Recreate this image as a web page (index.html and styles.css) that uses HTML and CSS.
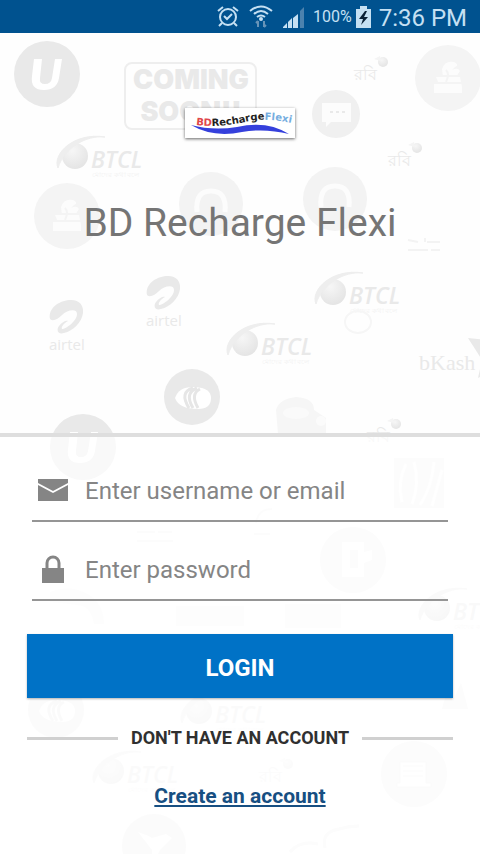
FILE: index.html
```
<!DOCTYPE html>
<html lang="en">
<head>
  <meta charset="UTF-8">
  <meta name="viewport" content="width=device-width, initial-scale=1.0">
  <title>BD Recharge Flexi</title>
  <link rel="stylesheet" href="styles.css">
</head>
<body>

  <!-- Operator logos behind the whole page -->
  <svg class="pattern" viewBox="0 0 480 854" preserveAspectRatio="xMidYMin slice" aria-hidden="true">
    <defs>
      <radialGradient id="globe" cx="0.4" cy="0.3" r="0.8">
        <stop offset="0" stop-color="#f6f6f6"/>
        <stop offset="1" stop-color="#e2e2e2"/>
      </radialGradient>
      <g id="btcl">
        <circle cx="19" cy="26" r="13" fill="url(#globe)"/>
        <path d="M2 38C-4 24 18 2 49 7C30 5 8 18 2 38z" fill="#eee" stroke="#eee"/>
        <text x="35" y="38" class="btcl-name">BTCL</text>
        <text x="36" y="47" class="btcl-tag">মোদের কথা বলে</text>
      </g>
      <g id="airtel">
        <path d="M1 19C-1 8 10 1 20 0C30-1 35 5 34 13C33 22 24 31 15 33C9 35 7 30 10 26C13 22 17 20 19 21C14 24 12 27 13 29C17 29 28 21 28 14C28 8 18 10 13 15C9 19 4 22 1 19z" fill="#e9e9e9"/>
        <text x="0" y="50" class="airtel-name">airtel</text>
      </g>
      <g id="robi">
        <text x="0" y="24" class="robi-name">রবি</text>
        <circle cx="29" cy="6" r="5" fill="url(#globe)"/>
        <path d="M20 3l6-3l1 5z" fill="#f4f4f4"/>
      </g>
      <g id="utility">
        <circle cx="0" cy="0" r="33" fill="#e9e9e9"/>
        <path d="M-13-15H-5L-7 4Q-8 10-2 10Q4 10 5 4L8-15H15L12 4Q10 16-3 16Q-17 16-15 2z" fill="#fff"/>
      </g>
      <g id="worker">
        <circle cx="0" cy="0" r="33" fill="#f4f4f4"/>
        <path d="M-14 15V6h5l-3-7h7l-1-8q3-9 12-7q6 3 1 5l-3 3q6-3 8 1l-4 6h4l2 10v6z" fill="#fcfcfc"/>
        <path d="M-14 5h28M-10-2h20M-2-8q4 4 0 12" fill="none" stroke="#f4f4f4" stroke-width="2"/>
      </g>
      <g id="support">
        <circle cx="0" cy="0" r="32" fill="#f3f3f3"/>
        <path d="M-14 8Q-16-13 0-13Q16-13 14 8" fill="none" stroke="#fcfcfc" stroke-width="5"/>
      </g>
      <g id="eye">
        <circle cx="0" cy="0" r="28" fill="#e9e9e9"/>
        <path d="M-17 1Q-13-11 3-10Q19-9 19 1Q19 12 6 12Q-13 12-17 1z" fill="#fff"/>
        <path d="M1-9Q-13-5-3 11M5-9Q-8-4 1 11M8-8Q-2-3 6 11" fill="none" stroke="#e6e6e6" stroke-width="3"/>
      </g>
    </defs>

    <use href="#utility" x="47" y="74"/>
    <rect x="125" y="63" width="131" height="66" rx="7" fill="none" stroke="#eee" stroke-width="2"/>
    <text x="191" y="89" class="soon">COMING</text>
    <text x="191" y="121" class="soon">SOON!!</text>
    <use href="#btcl" x="56" y="130"/>
    <use href="#btcl" x="314" y="266"/>
    <use href="#btcl" x="226" y="317"/>
    <use href="#robi" x="354" y="56"/>
    <use href="#robi" x="388" y="142"/>
    <use href="#robi" x="367" y="418"/>
    <use href="#worker" x="448" y="78"/>
    <use href="#worker" x="67" y="216"/>
    <use href="#support" x="211" y="204"/>
    <use href="#support" x="335" y="199"/>
    <circle cx="336" cy="114" r="24" fill="#f0f0f0"/>
    <path d="M322 103h29v19h-20l-5 5v-5h-4z" fill="#fcfcfc"/>
    <path d="M330 112h3m3 0h3m3 0h3" stroke="#e9e9e9" stroke-width="2"/>
    <path d="M408 240l10 2m7-4v4m2 0h13M408 250h20m3 0h9" stroke="#f3f3f3" stroke-width="2" fill="none"/>
    <use href="#airtel" x="146" y="276"/>
    <use href="#airtel" x="49" y="300"/>
    <ellipse cx="358" cy="322" rx="13" ry="11" fill="none" stroke="#f6f6f6" stroke-width="2"/>
    <use href="#eye" x="192" y="397"/>
    <text x="419" y="370" class="bkash">bKash</text>
    <path d="M468 338l18 2v34l-8 4l4-18z" fill="#e9e9e9"/>
    <path d="M276 410q3-11 20-13q18 1 18 13l12 8v16h-48z" fill="#f6f6f6"/>
    <ellipse cx="296" cy="413" rx="13" ry="6" fill="#fafafa"/>
    <circle cx="321" cy="421" r="5" fill="#fbfbfb"/>
    <use href="#utility" x="83" y="447"/>

    <path d="M394 458h50v50h-50z" fill="#f6f6f6"/>
    <path d="M402 502q-5-20 4-38M412 504q8-20 2-42M420 505q12-18 14-43M432 506l10-36" fill="none" stroke="#fdfdfd" stroke-width="3"/>
    <path d="M137 532h18m3 0h14M137 541h36M256 523q2-14 16-14M254 534h16" fill="none" stroke="#f6f6f6" stroke-width="2"/>
    <circle cx="353" cy="560" r="33" fill="#f3f3f3"/>
    <path d="M342 542h22v10l8-2v10l-8 3v14h-22zM350 550v18h8v-18z" fill="#fff" fill-rule="evenodd"/>
    <use href="#btcl" x="418" y="582"/>
    <path d="M50 592q20-8 38 2q16 10 16 30h-10q-3-16-12-18t-32-4zM176 606h68v20H176zM285 604h56v24h-56z" fill="#f8f8f8"/>
    <use href="#eye" x="56" y="710" opacity="0.6"/>
    <use href="#btcl" x="180" y="685" opacity="0.7"/>
    <use href="#btcl" x="92" y="745" opacity="0.7"/>
    <path d="M442 709l5-18l6 10l8-18l7 26z" fill="#f3f3f3"/>
    <use href="#robi" x="259" y="758" opacity="0.6"/>
    <circle cx="414" cy="774" r="33" fill="#f3f3f3"/>
    <path d="M400 762h26v21h5v4h-34v-4h3zM403 766h20M403 771h20M403 776h20" fill="#fff" stroke="#f1f1f1"/>
    <circle cx="154" cy="846" r="32" fill="#f1f1f1"/>
    <path d="M138 832q12 4 14 6l14-4l6 4l-12 12l-8 16v-16z" fill="#fff"/>
    <path d="M325 848q-4-16 14-19q10-3 20-3M290 852q10-12 28-8" fill="none" stroke="#f3f3f3" stroke-width="3"/>
  </svg>

  <header class="status-bar">
    <svg class="status-icon" width="22" height="24" viewBox="0 0 22 24" fill="none" stroke="#c5e0f3" stroke-width="2" role="img" aria-label="Alarm">
      <circle cx="11" cy="12" r="8"/>
      <path d="M7 11l3 3l5-5M1 6l5-4M21 6l-5-4M5 18l-3 3M17 18l3 3"/>
    </svg>
    <svg class="status-icon" width="24" height="24" viewBox="0 0 24 24" fill="none" stroke="#c5e0f3" stroke-width="2" role="img" aria-label="Wi-Fi">
      <path d="M1 6Q12-3 23 6M5 9Q12 3 19 9M8 12Q12 9 16 12"/>
      <circle cx="12" cy="14" r="1" fill="#c5e0f3"/>
      <path d="M9 22v-6M7 18l2-2M15 16v6M17 20l-2 2" stroke="#6894b8"/>
    </svg>
    <svg class="status-icon" width="22" height="24" viewBox="0 0 22 24" role="img" aria-label="Signal">
      <path d="M0 23v-1l4-4v5zM5 23v-6l4-4v10zM10 23v-10l5-4v14z" fill="#c5e0f3"/>
      <path d="M17 23V6l4-4v21z" fill="#4c82ae"/>
    </svg>
    <span class="battery-level">100%</span>
    <svg class="battery-icon" width="15" height="22" viewBox="0 0 15 22" role="img" aria-label="Charging">
      <path d="M0 3h4V0h7v3h4v19H0z" fill="#c5e0f3"/>
      <path d="M9 5L3 13h4l-2 6l7-8H8l3-6z" fill="#0a2136"/>
    </svg>
    <time class="clock">7:36 PM</time>
  </header>

  <section class="hero">
    <svg class="logo" width="110" height="30" viewBox="0 0 110 30" role="img" aria-label="BDRechargeFlexi">
      <path id="logoWave" d="M11 17Q32 20 60 14Q78 9 106 15" fill="none"/>
      <path d="M6 17Q28 23 52 19Q82 12 104 26Q80 20 57 24Q28 30 6 17z" fill="#3540dc"/>
      <text class="logo-text"><textPath href="#logoWave"><tspan fill="#e0474c">BD</tspan><tspan fill="#222">Recharge</tspan><tspan fill="#75ade0">Flexi</tspan></textPath></text>
    </svg>
    <h1>BD Recharge Flexi</h1>
  </section>

  <main class="login-panel">
    <form class="login-form">
      <div class="field">
        <label for="username" aria-label="Username or email">
          <svg width="30" height="22" viewBox="0 0 30 22" fill="#858585">
            <path d="M0 0h30v4L15 12L0 4z"/>
            <path d="M0 6l15 8l15-8v16H0z"/>
          </svg>
        </label>
        <input type="text" id="username" placeholder="Enter username or email">
      </div>
      <div class="field">
        <label for="password" aria-label="Password">
          <svg width="30" height="28" viewBox="0 0 30 28" fill="#858585">
            <path d="M4 13h22v15H4z"/>
            <path d="M9 14V8a6 6 0 0 1 12 0v6" fill="none" stroke="#858585" stroke-width="3"/>
          </svg>
        </label>
        <input type="password" id="password" placeholder="Enter password">
      </div>
      <button type="submit" class="login-button">LOGIN</button>
    </form>
    <p class="divider">DON'T HAVE AN ACCOUNT</p>
    <a href="#" class="create-link">Create an account</a>
  </main>

</body>
</html>
```
FILE: styles.css
```
* {
  box-sizing: border-box;
}
body {
  font-family: Roboto, sans-serif;
  margin: 0;
  min-height: 100vh;
  display: flex;
  flex-direction: column;
  position: relative;
  overflow-x: hidden;
  background-color: #fefefe;
}
.pattern {
  position: absolute;
  top: 0;
  left: 0;
  width: 100%;
  height: 100%;
  z-index: -1;
}
.pattern text {
  fill: #e9e9e9;
}
.pattern .btcl-name {
  font: italic 600 23px "Open Sans", sans-serif;
}
.pattern .btcl-tag {
  font-size: 7px;
  fill: #f2f2f2;
}
.pattern .airtel-name {
  font: 15px "Open Sans", sans-serif;
}
.pattern .robi-name {
  font-size: 16px;
}
.pattern .bkash {
  font: 22px "Liberation Serif", serif;
}
.pattern .soon {
  font: 900 27px Inter, sans-serif;
  text-anchor: middle;
}
.status-bar {
  display: flex;
  align-items: center;
  justify-content: flex-end;
  height: 33px;
  padding-right: 13px;
  background-color: #00528f;
  color: #c5e0f3;
}
.status-icon {
  margin-right: 10px;
}
.battery-level {
  font-size: 16px;
  margin-right: 4px;
}
.status-icon + .battery-level {
  margin-left: -2px;
}
.clock {
  font-size: 24px;
  line-height: 28px;
  padding-top: 3px;
  margin-left: 8px;
}
.hero {
  display: flex;
  flex-direction: column;
  align-items: center;
  height: 400px;
  padding-top: 75px;
}
.logo {
  background-color: #fff;
  box-shadow: 0 1px 3px rgba(0, 0, 0, 0.6);
}
.logo-text {
  font: bold 10px "DejaVu Sans", sans-serif;
}
h1 {
  margin: 61px 0 0;
  font-size: 39px;
  line-height: 48px;
  font-weight: 400;
  color: #757575;
}
.login-panel {
  flex: 1;
  display: flex;
  flex-direction: column;
  padding: 20px 27px;
  border-top: 4px solid #dedede;
  background-color: rgba(255, 255, 255, 0.7);
}
.login-form {
  display: flex;
  flex-direction: column;
}
.field {
  display: flex;
  align-items: center;
  height: 65px;
  margin: 0 5px 14px;
  padding-top: 3px;
  border-bottom: 2px solid #959595;
}
.field label {
  display: flex;
  padding: 0 17px 0 6px;
}
.field input {
  flex: 1;
  min-width: 0;
  padding: 2px 0 0;
  border: 0;
  outline: 0;
  background: none;
  font-family: inherit;
  font-size: 24px;
  color: #333;
}
.field input::placeholder {
  color: #858585;
  opacity: 1;
}
.login-button {
  height: 64px;
  margin-top: 19px;
  padding-top: 4px;
  border: 0;
  background-color: #0072c6;
  box-shadow: 0 1px 2px rgba(0, 0, 0, 0.3);
  color: #fff;
  font-family: inherit;
  font-size: 24px;
  font-weight: 700;
  cursor: pointer;
}
.divider {
  display: flex;
  align-items: center;
  gap: 13px;
  margin: 28px 0 34px;
  font-size: 18px;
  line-height: 24px;
  font-weight: 700;
  color: #303030;
}
.divider::before,
.divider::after {
  content: "";
  flex: 1;
  height: 3px;
  background-color: #d0d0d0;
}
.create-link {
  align-self: center;
  font-size: 21px;
  line-height: 24px;
  font-weight: 700;
  color: #174f82;
}
```
